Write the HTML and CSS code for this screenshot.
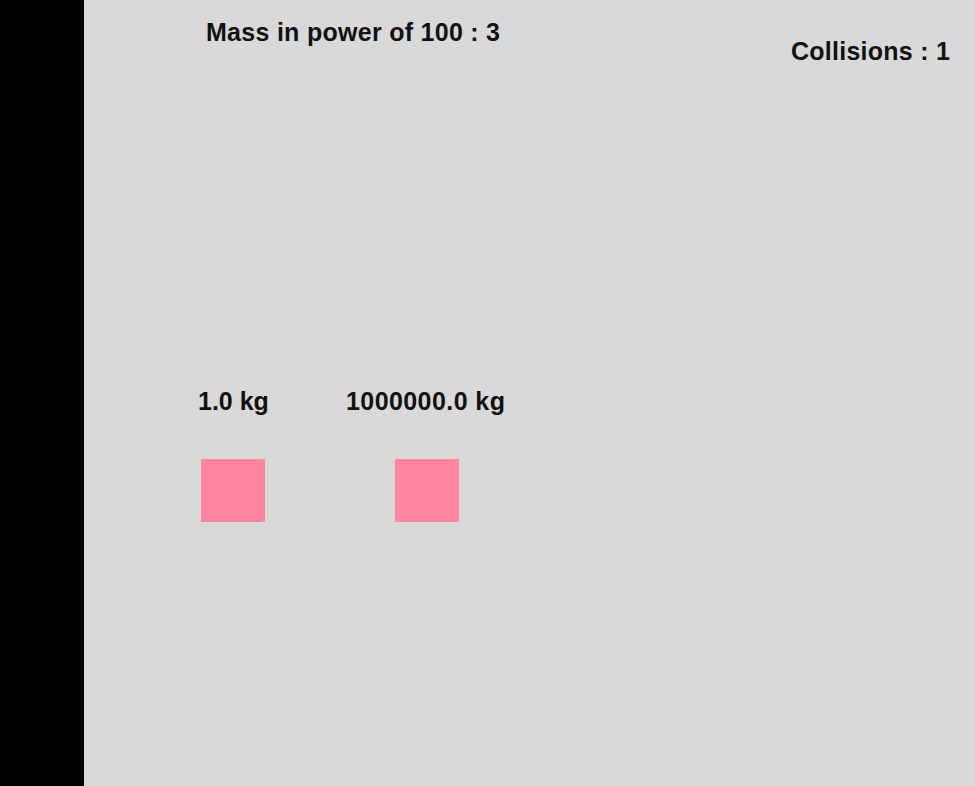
FILE: index.html
```html
<!DOCTYPE html>
<html>
<head>
<meta charset="utf-8">
<link rel="stylesheet" href="styles.css">
</head>
<body>
<div class="app">
  <aside class="side"></aside>
  <main class="stage">
    <div class="label mass-power">Mass in power of 100 : 3</div>
    <div class="label collisions">Collisions : 1</div>
    <div class="label weight weight-a">1.0 kg</div>
    <div class="label weight weight-b">1000000.0 kg</div>
    <div class="block block-a"></div>
    <div class="block block-b"></div>
  </main>
</div>
</body>
</html>
```
FILE: styles.css
```css
html, body {
  margin: 0;
  padding: 0;
  width: 975px;
  height: 786px;
  overflow: hidden;
}
.app {
  display: flex;
  width: 975px;
  height: 786px;
}
.side {
  width: 84px;
  background: #000;
  flex: none;
}
.stage {
  position: relative;
  flex: 1;
  background: #d9d9d9;
}
.label {
  position: absolute;
  font-family: "Liberation Sans", Arial, sans-serif;
  font-weight: bold;
  font-size: 25px;
  line-height: 1;
  color: #111;
  white-space: nowrap;
}
.mass-power {
  left: 122px;
  top: 20px;
  letter-spacing: 0.28px;
}
.collisions {
  left: 707px;
  top: 39px;
  letter-spacing: 0.25px;
}
.weight-a {
  left: 114px;
  top: 389px;
}
.weight-b {
  left: 262px;
  top: 389px;
  letter-spacing: 0.42px;
}
.block {
  position: absolute;
  width: 64px;
  height: 63px;
  background: #ff85a0;
  top: 459px;
}
.block-a { left: 117px; }
.block-b { left: 311px; }
```
